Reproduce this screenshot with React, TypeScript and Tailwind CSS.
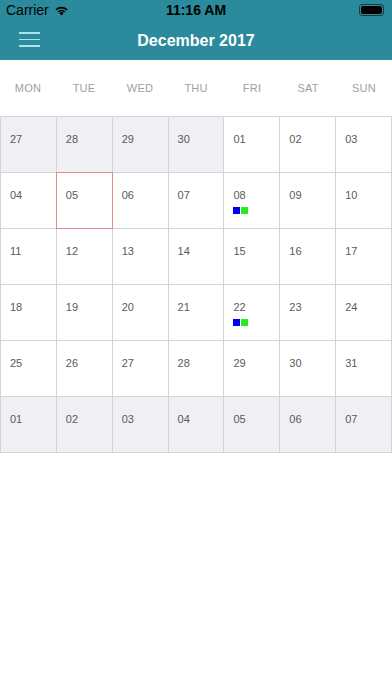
import React from 'react';

type Day = { label: string; muted?: boolean; today?: boolean; events?: boolean };

const days: Day[] = [
  ...['27', '28', '29', '30'].map((d) => ({ label: d, muted: true })),
  ...Array.from({ length: 31 }, (_, i) => ({
    label: String(i + 1).padStart(2, '0'),
    today: i + 1 === 5,
    events: i + 1 === 8 || i + 1 === 22,
  })),
  ...['01', '02', '03', '04', '05', '06', '07'].map((d) => ({ label: d, muted: true })),
];

const weekDays = ['MON', 'TUE', 'WED', 'THU', 'FRI', 'SAT', 'SUN'];

const App: React.FC = () => {
  return (
    <div className="w-[392px] h-[696px] bg-white overflow-hidden" style={{ fontFamily: '"Helvetica Neue", "Liberation Sans", Arial, sans-serif' }}>
      {/* Header */}
      <div className="bg-[#2b8a9b] h-[60px] flex flex-col">
        <div className="h-[20px] flex items-center justify-between px-[6px] text-black text-[14px]">
          <div className="flex items-center gap-[5px] w-[100px]">
            <span>Carrier</span>
            <svg width="15" height="11" viewBox="0 0 15 11">
              <path d="M7.5 10.5 L5.3 8.1 A3.2 3.2 0 0 1 9.7 8.1 Z" fill="#000" />
              <path d="M3.6 6.4 A5.6 5.6 0 0 1 11.4 6.4 L10.2 7.6 A3.9 3.9 0 0 0 4.8 7.6 Z" fill="#000" />
              <path d="M1.4 4.2 A8.8 8.8 0 0 1 13.6 4.2 L12.4 5.4 A7.1 7.1 0 0 0 2.6 5.4 Z" fill="#000" />
            </svg>
          </div>
          <span className="font-bold">11:16 AM</span>
          <div className="w-[100px] flex justify-end pr-[2px]">
            <div className="w-[25px] h-[12px] rounded-[3px] border border-[#1a3a40] p-[1px] flex items-center">
              <div className="w-full h-full bg-black rounded-[2px]" />
            </div>
          </div>
        </div>
        <div className="flex-1 flex items-center relative">
          <div className="absolute left-[19px] top-[12px] flex flex-col gap-[5px]">
            <div className="w-[21px] h-[1.5px] bg-[#a8e4ec]" />
            <div className="w-[21px] h-[1.5px] bg-[#a8e4ec]" />
            <div className="w-[21px] h-[1.5px] bg-[#a8e4ec]" />
          </div>
          <div className="flex-1 text-center text-white font-bold text-[16px] pt-[2px]">December 2017</div>
        </div>
      </div>

      {/* Weekday labels */}
      <div className="grid grid-cols-7 h-[56px] items-center">
        {weekDays.map((w) => (
          <div key={w} className="text-center text-[11px] text-[#a0a0a0] tracking-[0.2px]">
            {w}
          </div>
        ))}
      </div>

      {/* Month grid */}
      <div className="grid grid-cols-7 border-t border-l border-[#d4d4d4]">
        {days.map((d, i) => (
          <div
            key={i}
            className={`h-[56px] border-r border-b border-[#d4d4d4] ${d.muted ? 'bg-[#efeff4]' : 'bg-white'} relative`}
          >
            {d.today && <div className="absolute -left-px -top-px w-[57px] h-[57px] border border-[#e38a8a]" />}
            <div className="pl-[9px] pt-[16px] text-[11px] text-[#5a5a5a] leading-[13px]">{d.label}</div>
            {d.events && (
              <div className="flex gap-[1px] pl-[9px] pt-[5px]">
                <div className="w-[7px] h-[7px] bg-[#0000ee]" />
                <div className="w-[7px] h-[7px] bg-[#22ee22]" />
              </div>
            )}
          </div>
        ))}
      </div>
    </div>
  );
};

export default App;
